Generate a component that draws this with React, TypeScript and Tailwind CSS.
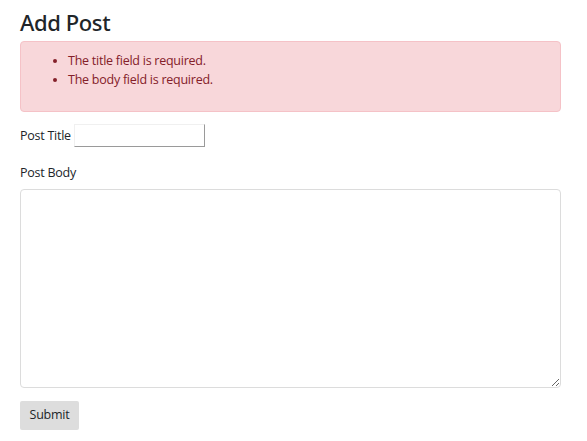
export default function App() {
  return (
    <div className="min-h-screen bg-white px-5 pt-[6px] text-[#212529] font-['Open_Sans','Noto_Sans',sans-serif]">
      <h1 className="font-['Noto_Sans','Open_Sans',sans-serif] text-[22px] font-medium leading-[32px] tracking-[-0.4px]">
        Add Post
      </h1>

      <div className="mt-[3px] h-[71px] w-[541px] rounded-[4px] border border-[#f5c2c7] bg-[#f8d7da] pt-[9px] text-[#842029]">
        <ul className="list-disc pl-[47px] text-[12.5px] leading-[19px] tracking-[-0.25px]">
          <li>The title field is required.</li>
          <li>The body field is required.</li>
        </ul>
      </div>

      <div className="mt-[12px] flex items-center">
        <label className="text-[12.5px] leading-[20px] tracking-[-0.25px]">Post Title</label>
        <input
          type="text"
          className="ml-[3px] h-[23px] w-[131px] border border-t-[#f0f0f0] border-l-[#f0f0f0] border-r-[#9a9a9a] border-b-[#9a9a9a] px-1 outline-none"
        />
      </div>

      <div className="mt-[16px]">
        <label className="block text-[12.5px] leading-[20px] tracking-[-0.25px]">Post Body</label>
        <textarea className="mt-[6px] block h-[199px] w-[541px] rounded-[4px] border border-[#dcdcdc] outline-none" />
      </div>

      <button className="mt-[13px] h-[29px] w-[59px] rounded-[2px] bg-[#dddddd] text-[12.5px] tracking-[-0.25px] text-[#212529]">
        Submit
      </button>
    </div>
  );
}
